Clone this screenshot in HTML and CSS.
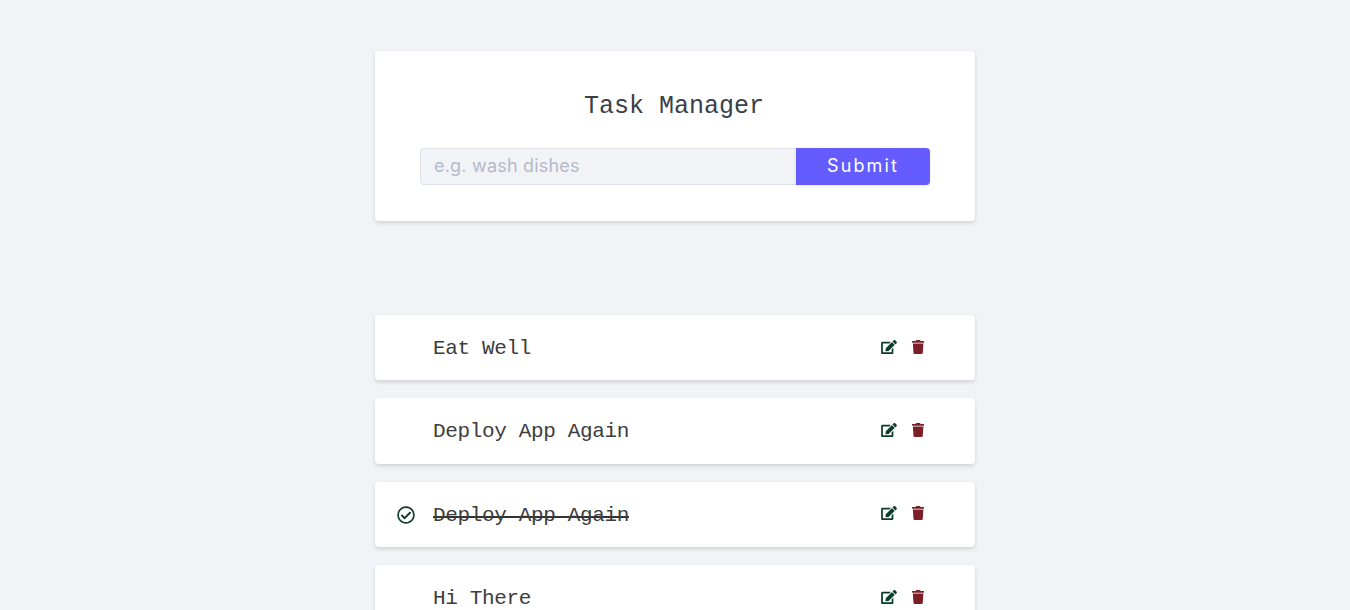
FILE: index.html
```html
<!DOCTYPE html>
<html lang="en">
<head>
<meta charset="utf-8">
<title>Task Manager</title>
<link rel="stylesheet" href="styles.css">
</head>
<body>
<main class="page">
  <form class="card">
    <h1 class="title">Task Manager</h1>
    <div class="form-row">
      <input class="input" type="text" placeholder="e.g. wash dishes">
      <button class="submit" type="button">Submit</button>
    </div>
  </form>
  <section class="tasks">
    <article class="task">
      <span class="status"></span>
      <h2 class="name">Eat Well</h2>
      <div class="actions">
        <svg class="edit" viewBox="0 0 576 512"><path fill="currentColor" d="M402.6 83.2l90.2 90.2c3.8 3.8 3.8 10 0 13.8L274.4 405.6l-92.8 10.3c-12.4 1.4-22.9-9.1-21.5-21.5l10.3-92.8L388.8 83.2c3.8-3.8 10-3.8 13.8 0zm162-22.9l-48.8-48.8c-15.2-15.2-39.9-15.2-55.2 0l-35.4 35.4c-3.8 3.8-3.8 10 0 13.8l90.2 90.2c3.8 3.8 10 3.8 13.8 0l35.4-35.4c15.2-15.3 15.2-40 0-55.2zM384 346.2V448H64V128h229.8c3.2 0 6.2-1.3 8.5-3.5l40-40c7.6-7.6 2.2-20.5-8.5-20.5H48C21.5 64 0 85.5 0 112v352c0 26.5 21.5 48 48 48h352c26.5 0 48-21.5 48-48V306.2c0-10.7-12.9-16-20.5-8.5l-40 40c-2.2 2.3-3.5 5.3-3.5 8.5z"/></svg>
        <svg class="trash" viewBox="0 0 448 512"><path fill="currentColor" d="M432 32H312l-9.4-18.7A24 24 0 0 0 281.1 0H166.8a23.72 23.72 0 0 0-21.4 13.3L136 32H16A16 16 0 0 0 0 48v32a16 16 0 0 0 16 16h416a16 16 0 0 0 16-16V48a16 16 0 0 0-16-16zM53.2 467a48 48 0 0 0 47.9 45h245.8a48 48 0 0 0 47.9-45L416 128H32z"/></svg>
      </div>
    </article>
    <article class="task">
      <span class="status"></span>
      <h2 class="name">Deploy App Again</h2>
      <div class="actions">
        <svg class="edit" viewBox="0 0 576 512"><path fill="currentColor" d="M402.6 83.2l90.2 90.2c3.8 3.8 3.8 10 0 13.8L274.4 405.6l-92.8 10.3c-12.4 1.4-22.9-9.1-21.5-21.5l10.3-92.8L388.8 83.2c3.8-3.8 10-3.8 13.8 0zm162-22.9l-48.8-48.8c-15.2-15.2-39.9-15.2-55.2 0l-35.4 35.4c-3.8 3.8-3.8 10 0 13.8l90.2 90.2c3.8 3.8 10 3.8 13.8 0l35.4-35.4c15.2-15.3 15.2-40 0-55.2zM384 346.2V448H64V128h229.8c3.2 0 6.2-1.3 8.5-3.5l40-40c7.6-7.6 2.2-20.5-8.5-20.5H48C21.5 64 0 85.5 0 112v352c0 26.5 21.5 48 48 48h352c26.5 0 48-21.5 48-48V306.2c0-10.7-12.9-16-20.5-8.5l-40 40c-2.2 2.3-3.5 5.3-3.5 8.5z"/></svg>
        <svg class="trash" viewBox="0 0 448 512"><path fill="currentColor" d="M432 32H312l-9.4-18.7A24 24 0 0 0 281.1 0H166.8a23.72 23.72 0 0 0-21.4 13.3L136 32H16A16 16 0 0 0 0 48v32a16 16 0 0 0 16 16h416a16 16 0 0 0 16-16V48a16 16 0 0 0-16-16zM53.2 467a48 48 0 0 0 47.9 45h245.8a48 48 0 0 0 47.9-45L416 128H32z"/></svg>
      </div>
    </article>
    <article class="task">
      <span class="status">
        <svg class="check" viewBox="0 0 512 512"><path fill="currentColor" d="M256 8C119.033 8 8 119.033 8 256s111.033 248 248 248 248-111.033 248-248S392.967 8 256 8zm0 48c110.532 0 200 89.451 200 200 0 110.532-89.451 200-200 200-110.532 0-200-89.451-200-200 0-110.532 89.451-200 200-200m140.204 130.267l-22.536-22.718c-4.667-4.705-12.265-4.736-16.97-.068L215.346 303.697l-59.792-60.277c-4.667-4.705-12.265-4.736-16.97-.069l-22.719 22.536c-4.705 4.667-4.736 12.265-.068 16.971l90.781 91.516c4.667 4.705 12.265 4.736 16.97.068l172.589-171.204c4.704-4.668 4.734-12.266.067-16.971z"/></svg>
      </span>
      <h2 class="name"><span class="done">Deploy App Again</span></h2>
      <div class="actions">
        <svg class="edit" viewBox="0 0 576 512"><path fill="currentColor" d="M402.6 83.2l90.2 90.2c3.8 3.8 3.8 10 0 13.8L274.4 405.6l-92.8 10.3c-12.4 1.4-22.9-9.1-21.5-21.5l10.3-92.8L388.8 83.2c3.8-3.8 10-3.8 13.8 0zm162-22.9l-48.8-48.8c-15.2-15.2-39.9-15.2-55.2 0l-35.4 35.4c-3.8 3.8-3.8 10 0 13.8l90.2 90.2c3.8 3.8 10 3.8 13.8 0l35.4-35.4c15.2-15.3 15.2-40 0-55.2zM384 346.2V448H64V128h229.8c3.2 0 6.2-1.3 8.5-3.5l40-40c7.6-7.6 2.2-20.5-8.5-20.5H48C21.5 64 0 85.5 0 112v352c0 26.5 21.5 48 48 48h352c26.5 0 48-21.5 48-48V306.2c0-10.7-12.9-16-20.5-8.5l-40 40c-2.2 2.3-3.5 5.3-3.5 8.5z"/></svg>
        <svg class="trash" viewBox="0 0 448 512"><path fill="currentColor" d="M432 32H312l-9.4-18.7A24 24 0 0 0 281.1 0H166.8a23.72 23.72 0 0 0-21.4 13.3L136 32H16A16 16 0 0 0 0 48v32a16 16 0 0 0 16 16h416a16 16 0 0 0 16-16V48a16 16 0 0 0-16-16zM53.2 467a48 48 0 0 0 47.9 45h245.8a48 48 0 0 0 47.9-45L416 128H32z"/></svg>
      </div>
    </article>
    <article class="task">
      <span class="status"></span>
      <h2 class="name">Hi There</h2>
      <div class="actions">
        <svg class="edit" viewBox="0 0 576 512"><path fill="currentColor" d="M402.6 83.2l90.2 90.2c3.8 3.8 3.8 10 0 13.8L274.4 405.6l-92.8 10.3c-12.4 1.4-22.9-9.1-21.5-21.5l10.3-92.8L388.8 83.2c3.8-3.8 10-3.8 13.8 0zm162-22.9l-48.8-48.8c-15.2-15.2-39.9-15.2-55.2 0l-35.4 35.4c-3.8 3.8-3.8 10 0 13.8l90.2 90.2c3.8 3.8 10 3.8 13.8 0l35.4-35.4c15.2-15.3 15.2-40 0-55.2zM384 346.2V448H64V128h229.8c3.2 0 6.2-1.3 8.5-3.5l40-40c7.6-7.6 2.2-20.5-8.5-20.5H48C21.5 64 0 85.5 0 112v352c0 26.5 21.5 48 48 48h352c26.5 0 48-21.5 48-48V306.2c0-10.7-12.9-16-20.5-8.5l-40 40c-2.2 2.3-3.5 5.3-3.5 8.5z"/></svg>
        <svg class="trash" viewBox="0 0 448 512"><path fill="currentColor" d="M432 32H312l-9.4-18.7A24 24 0 0 0 281.1 0H166.8a23.72 23.72 0 0 0-21.4 13.3L136 32H16A16 16 0 0 0 0 48v32a16 16 0 0 0 16 16h416a16 16 0 0 0 16-16V48a16 16 0 0 0-16-16zM53.2 467a48 48 0 0 0 47.9 45h245.8a48 48 0 0 0 47.9-45L416 128H32z"/></svg>
      </div>
    </article>
  </section>
</main>
</body>
</html>
```
FILE: styles.css
```css
* { box-sizing: border-box; }
html { overflow: hidden; }
body {
  margin: 0;
  background: #f1f3f7;
  color: #333;
  font-family: "Liberation Mono", monospace;
}
.page {
  width: 600px;
  margin: 0 auto;
  padding-top: 51px;
}
.card {
  height: 170px;
  padding: 41px 46px 0 45px;
  background: #fff;
  border-radius: 4px;
  box-shadow: 0 2px 4px rgba(0, 0, 0, 0.14);
}
.title {
  margin: 0 0 27px;
  padding-right: 1px;
  font-size: 25px;
  font-weight: 400;
  line-height: 29px;
  text-align: center;
  color: #3a3f48;
}
.form-row { display: flex; height: 37px; width: 510px; }
.input {
  flex: 1;
  min-width: 0;
  padding: 0 13px 2px;
  background: #f1f3f7;
  border: 1px solid #dde0e6;
  border-right: 0;
  border-radius: 4px 0 0 4px;
  font-family: "Inter", sans-serif;
  font-size: 18px;
  letter-spacing: 0.2px;
  color: #333;
  outline: none;
}
.input::placeholder { color: #b4bac8; opacity: 1; }
.submit {
  width: 134px;
  padding: 0 0 2px;
  background: #645cff;
  border: 0;
  border-radius: 0 4px 4px 0;
  box-shadow: 0 1px 3px rgba(0, 0, 0, 0.1);
  color: #fff;
  font-family: "Inter", sans-serif;
  font-size: 18px;
  letter-spacing: 2.1px;
}
.tasks {
  display: flex;
  flex-direction: column;
  gap: 18px;
  margin-top: 94px;
}
.task {
  display: flex;
  align-items: center;
  height: 65.33px;
  flex: none;
  background: #fff;
  border-radius: 4px;
  box-shadow: 0 2px 4px rgba(0, 0, 0, 0.14);
}
.status {
  display: flex;
  justify-content: center;
  flex: none;
  width: 58px;
  padding: 1px 0 0 4px;
  color: #0f3d2e;
}
.check { width: 18px; height: 18px; display: block; }
.name {
  flex: 1;
  margin: 0;
  padding-top: 1px;
  font-size: 21px;
  font-weight: 400;
  letter-spacing: -0.35px;
  color: #3d3d3d;
}
.done {
  display: inline-block;
  margin-top: 1px;
  background: linear-gradient(#333, #333) 0 12px / 100% 2px no-repeat;
}
.actions {
  display: flex;
  align-items: center;
  gap: 15px;
  flex: none;
  width: 94px;
  margin-top: -2px;
}
.edit { width: 16px; height: 14px; color: #0b3d2c; display: block; }
.trash { width: 12.25px; height: 14px; color: #7b1f28; display: block; }
```
